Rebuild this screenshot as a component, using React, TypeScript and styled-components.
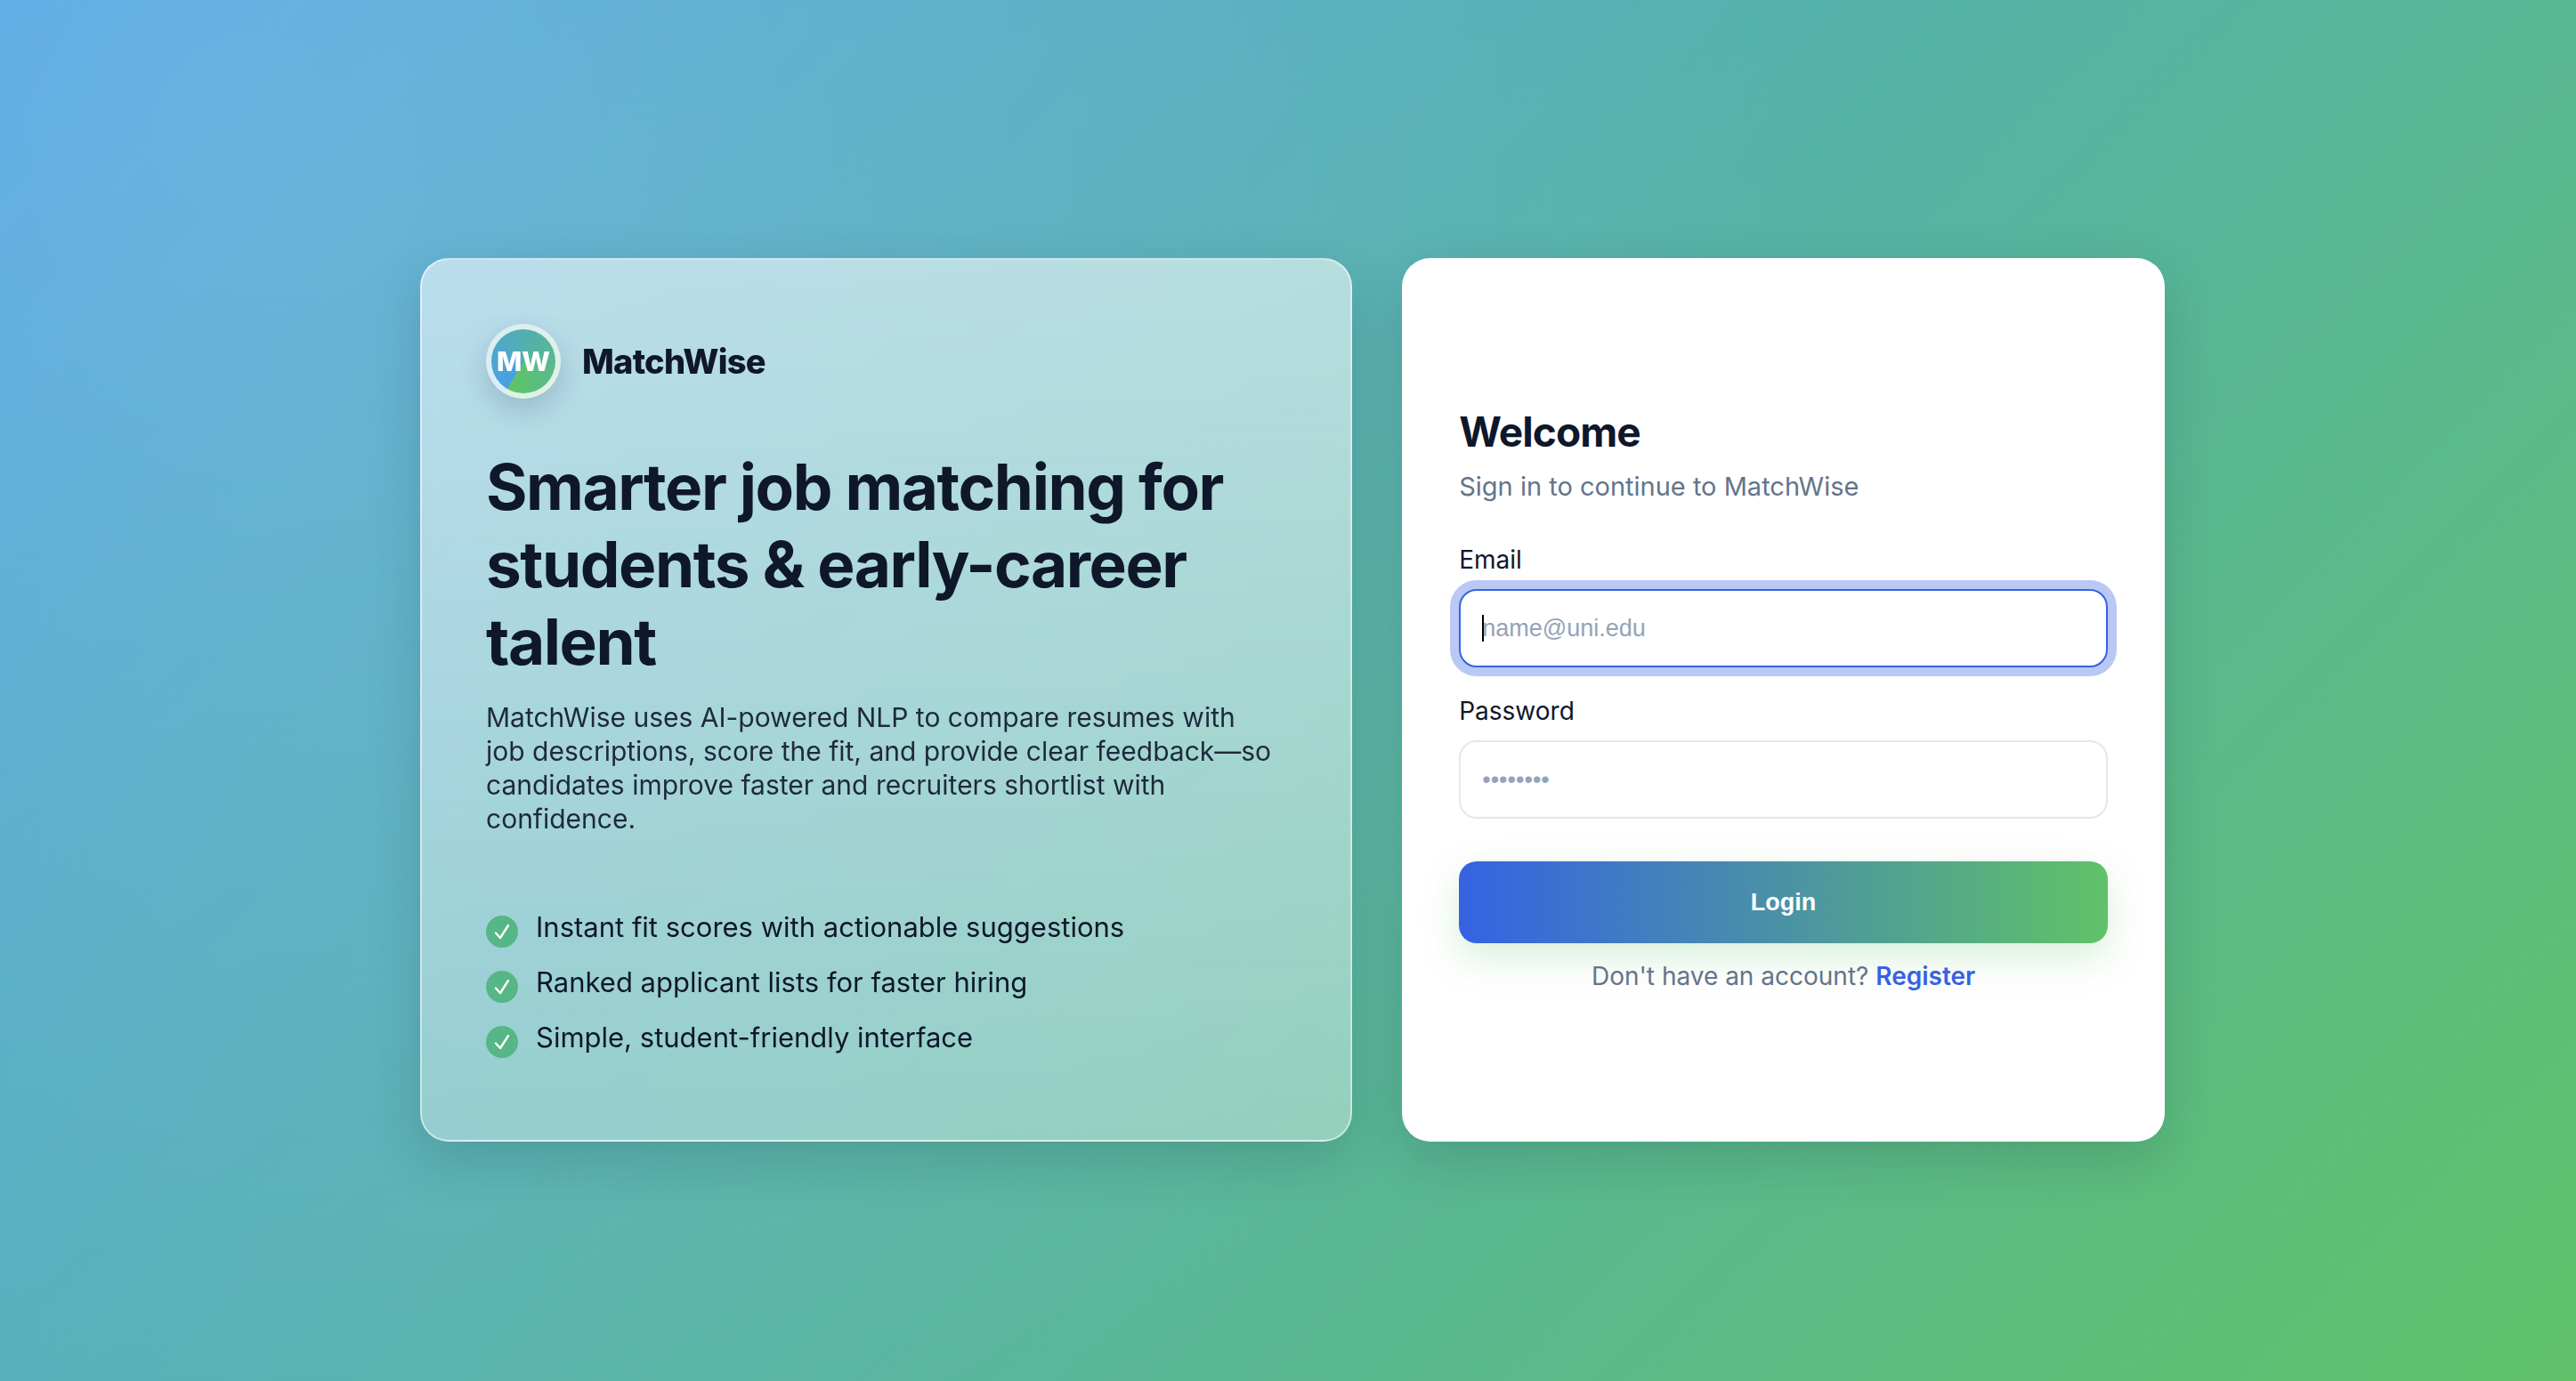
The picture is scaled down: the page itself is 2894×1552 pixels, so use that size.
import React, { useState } from "react";
import styled, { createGlobalStyle } from "styled-components";

const GlobalStyle = createGlobalStyle`
  *, *::before, *::after { box-sizing: border-box; }
  body {
    margin: 0;
    font-family: Inter, "Liberation Sans", sans-serif;
    font-size: 31px;
    line-height: 38px;
    color: #0f172a;
  }
`;

const Page = styled.div`
  min-height: 100vh;
  display: grid;
  place-items: center;
  padding: 60px 38px 40px 48px;
  background:
    radial-gradient(circle at 10% 10%, rgba(255, 255, 255, 0.15), transparent 60%),
    linear-gradient(135deg, #4ca3e4 0%, #5fc269 100%);
`;

const Shell = styled.main`
  width: 100%;
  max-width: 1960px;
  display: grid;
  grid-template-columns: 11fr 9fr;
  gap: 56px;
`;

const Card = styled.section`
  border-radius: 32px;
  box-shadow: 0 20px 60px rgba(15, 23, 42, 0.16);
`;

const IntroCard = styled(Card)`
  padding: 72px;
  border: 2px solid rgba(255, 255, 255, 0.5);
  background: linear-gradient(180deg, rgba(255, 255, 255, 0.56), rgba(255, 255, 255, 0.35));
  backdrop-filter: blur(12px);
`;

const Brand = styled.div`
  display: flex;
  align-items: center;
  gap: 24px;
  margin-bottom: 56px;
`;

const Logo = styled.div`
  width: 84px;
  height: 84px;
  display: grid;
  place-items: center;
  border-radius: 50%;
  border: 6px solid rgba(255, 255, 255, 0.8);
  background: conic-gradient(from 210deg, #4a9fe6, #5fc466) border-box;
  box-shadow: 0 12px 32px rgba(15, 23, 42, 0.18);
  color: #fff;
  font-size: 30px;
  font-weight: 800;
`;

const BrandName = styled.span`
  font-size: 38px;
  font-weight: 800;
  letter-spacing: -0.02em;
`;

const Headline = styled.h1`
  margin: 0 0 22px;
  font-size: 71px;
  line-height: 87px;
  font-weight: 700;
  letter-spacing: -0.02em;
`;

const Lead = styled.p`
  max-width: 886px;
  margin: 0 0 84px;
  font-size: 30px;
  color: #1e293b;
`;

const Features = styled.ul`
  list-style: none;
  margin: 0;
  padding: 0 0 20px;
  display: grid;
  gap: 20px;
`;

const Feature = styled.li`
  display: flex;
  align-items: flex-start;
  gap: 20px;
`;

const CheckBadge = styled.span`
  flex: none;
  width: 36px;
  height: 36px;
  margin-top: 6px;
  display: grid;
  place-items: center;
  border-radius: 50%;
  background: #56b685;
`;

const FormCard = styled(Card)`
  display: flex;
  flex-direction: column;
  justify-content: center;
  padding: 64px;
  background: #fff;
`;

const Title = styled.h2`
  margin: 0 0 14px;
  font-size: 46px;
  line-height: 58px;
  font-weight: 700;
  letter-spacing: -0.02em;
`;

const Muted = styled.p`
  margin: 0;
  font-size: 29px;
  color: #64748b;
`;

const Form = styled.form`
  display: flex;
  flex-direction: column;
  margin: 44px 0 18px;
`;

const Field = styled.div`
  display: flex;
  flex-direction: column;
  gap: 14px;
  margin-bottom: 30px;
`;

const Label = styled.label`
  font-size: 28px;
`;

const InputWrap = styled.div`
  position: relative;
  display: flex;
`;

const Input = styled.input<{ $active?: boolean }>`
  width: 100%;
  height: 88px;
  padding: 0 24px;
  border: 2px solid ${(p) => (p.$active ? "#3662e3" : "#e2e8f0")};
  border-radius: 20px;
  outline: none;
  background: #fff;
  color: #0f172a;
  caret-color: transparent;
  font-family: "Liberation Sans", Arial, sans-serif;
  font-size: 27px;
  box-shadow: ${(p) => (p.$active ? "0 0 0 10px rgba(54, 98, 227, 0.35)" : "none")};

  &::placeholder {
    color: #94a3b8;
    opacity: 1;
  }
`;

const Caret = styled.span`
  position: absolute;
  top: 29px;
  left: 26px;
  width: 2px;
  height: 30px;
  background: #000;
`;

const LoginButton = styled.button`
  height: 92px;
  margin-top: 18px;
  border: 0;
  border-radius: 20px;
  background: linear-gradient(90deg, #3662e3, #5fc267);
  box-shadow: 0 16px 40px rgba(95, 194, 103, 0.25);
  color: #fff;
  font-family: "Liberation Sans", Arial, sans-serif;
  font-size: 27px;
  font-weight: 700;
  cursor: pointer;
`;

const Footer = styled(Muted)`
  text-align: center;
  font-size: 28px;
`;

const RegisterLink = styled.a`
  color: #3662e3;
  font-weight: 600;
  text-decoration: none;
`;

const features = [
  "Instant fit scores with actionable suggestions",
  "Ranked applicant lists for faster hiring",
  "Simple, student-friendly interface",
];

const CheckIcon = () => (
  <svg width="20" height="20" viewBox="0 0 20 20" fill="none" aria-hidden="true">
    <path d="M3 11.5 8 17 17 3" stroke="#fff" strokeWidth="2.4" strokeLinecap="round" strokeLinejoin="round" />
  </svg>
);

type FieldName = "email" | "password" | null;

export default function App() {
  const [active, setActive] = useState<FieldName>("email");
  const [email, setEmail] = useState("");

  return (
    <>
      <GlobalStyle />
      <Page>
        <Shell>
          <IntroCard>
            <Brand>
              <Logo>MW</Logo>
              <BrandName>MatchWise</BrandName>
            </Brand>
            <Headline>Smarter job matching for students &amp; early-career talent</Headline>
            <Lead>
              MatchWise uses AI-powered NLP to compare resumes with job descriptions, score the fit, and provide clear
              feedback—so candidates improve faster and recruiters shortlist with confidence.
            </Lead>
            <Features>
              {features.map((text) => (
                <Feature key={text}>
                  <CheckBadge>
                    <CheckIcon />
                  </CheckBadge>
                  <span>{text}</span>
                </Feature>
              ))}
            </Features>
          </IntroCard>

          <FormCard>
            <Title>Welcome</Title>
            <Muted>Sign in to continue to MatchWise</Muted>
            <Form onSubmit={(e) => e.preventDefault()}>
              <Field>
                <Label htmlFor="email">Email</Label>
                <InputWrap>
                  <Input
                    id="email"
                    type="email"
                    placeholder="name@uni.edu"
                    value={email}
                    onChange={(e) => setEmail(e.target.value)}
                    onFocus={() => setActive("email")}
                    $active={active === "email"}
                  />
                  {active === "email" && email === "" && <Caret />}
                </InputWrap>
              </Field>
              <Field>
                <Label htmlFor="password">Password</Label>
                <Input
                  id="password"
                  type="password"
                  placeholder="••••••••"
                  onFocus={() => setActive("password")}
                  $active={active === "password"}
                />
              </Field>
              <LoginButton type="submit">Login</LoginButton>
            </Form>
            <Footer>
              Don't have an account? <RegisterLink href="#register">Register</RegisterLink>
            </Footer>
          </FormCard>
        </Shell>
      </Page>
    </>
  );
}
